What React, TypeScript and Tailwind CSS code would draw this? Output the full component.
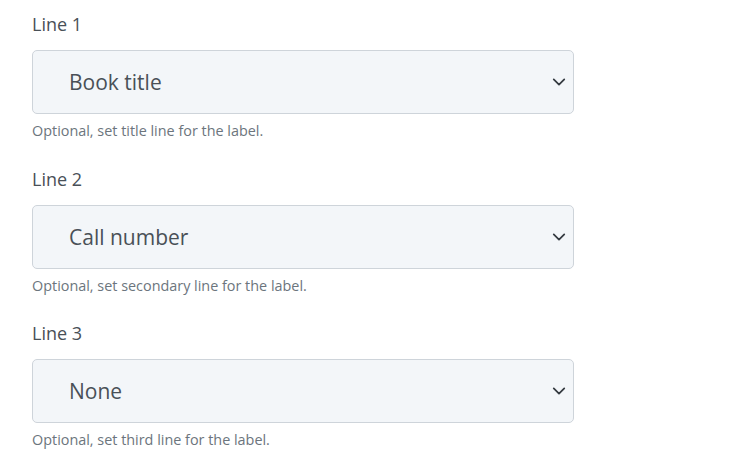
const fields = [
  { label: "Line 1", value: "Book title", help: "Optional, set title line for the label." },
  { label: "Line 2", value: "Call number", help: "Optional, set secondary line for the label." },
  { label: "Line 3", value: "None", help: "Optional, set third line for the label." },
]

function Chevron() {
  return (
    <svg width="14" height="14" viewBox="0 0 16 16" fill="none" className="text-[#343a40]">
      <path d="M2 5l6 6 6-6" stroke="currentColor" strokeWidth="2" strokeLinecap="round" strokeLinejoin="round" />
    </svg>
  )
}

export default function App() {
  return (
    <div className="min-h-screen bg-white px-8 pt-[12px] font-['Open_Sans',sans-serif]">
      <div className="flex w-[542px] flex-col gap-[25.5px]">
        {fields.map((f) => (
          <div key={f.label} className="flex flex-col">
            <label className="text-[18px] leading-[24px] text-[#495057]">{f.label}</label>
            <div className="mt-[14px] flex h-[64px] items-center justify-between rounded-[5px] border border-[#ced4da] bg-[#f3f6f9] pl-[36px] pr-[7px]">
              <span className="pt-[2px] text-[21px] text-[#495057]">{f.value}</span>
              <Chevron />
            </div>
            <p className="mt-[7px] text-[14.4px] leading-[20px] text-[#6c757d]">{f.help}</p>
          </div>
        ))}
      </div>
    </div>
  )
}
